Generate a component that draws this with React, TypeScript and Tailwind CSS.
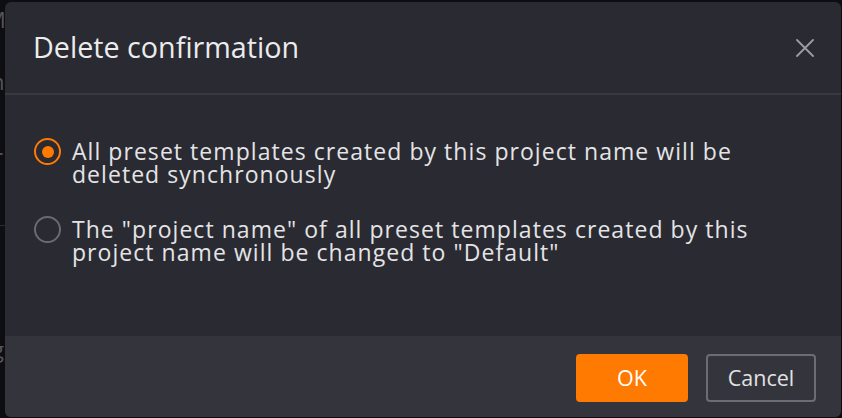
import React from "react";

function Radio({ checked }: { checked: boolean }) {
  return checked ? (
    <div className="w-[27px] h-[27px] rounded-full border-2 border-[#ff7a00] flex items-center justify-center shrink-0">
      <div className="w-[12px] h-[12px] rounded-full bg-[#ff7a00]" />
    </div>
  ) : (
    <div className="w-[27px] h-[27px] rounded-full border-2 border-[#6a6a70] shrink-0" />
  );
}

export default function App() {
  const font = { fontFamily: '"Open Sans", "Noto Sans", sans-serif' };
  return (
    <div className="relative w-[842px] h-[418px] bg-[#0d0d12] overflow-hidden" style={font}>
      {/* backdrop hints (page behind the dialog) */}
      <div className="absolute left-0 top-0 w-[5px] h-full overflow-hidden text-[#55555b] text-[22px] leading-none">
        <span className="absolute left-[-14px] top-[8px]">M</span>
        <span className="absolute left-[-9px] top-[70px]">n</span>
        <span className="absolute left-[-6px] top-[145px]">r</span>
        <div className="absolute top-[225px] left-0 w-[5px] h-[1px] bg-[#2a2a30]" />
        <span className="absolute left-[-8px] top-[338px]">g</span>
      </div>
      {/* dialog */}
      <div className="absolute left-[5px] top-[2px] w-[836px] h-[415px] rounded-[6px] bg-[#2a2a32] flex flex-col overflow-hidden">
        <div className="h-[93px] shrink-0 border-b-2 border-[#38383f] flex items-center justify-between pl-[28px] pr-[27px]">
          <span className="text-[28.7px] text-[#ececec] leading-none pb-[1px]">Delete confirmation</span>
          <svg width="18" height="18" viewBox="0 0 18 18" className="mt-[1px]">
            <path d="M1 1L17 17M17 1L1 17" stroke="#9c9ca2" strokeWidth="1.8" strokeLinecap="round" />
          </svg>
        </div>
        <div className="flex-1 flex flex-col gap-[32px] pl-[29px] pt-[45px]">
          <div className="flex items-start gap-[11px]">
            <div className="mt-[-2px]">
              <Radio checked />
            </div>
            <p className="text-[23px] leading-[23px] tracking-[1.05px] text-[#e4e4e6]">
              All preset templates created by this project name will be
              <br />
              deleted synchronously
            </p>
          </div>
          <div className="flex items-start gap-[11px]">
            <div className="mt-[-2px]">
              <Radio checked={false} />
            </div>
            <p className="text-[23px] leading-[23px] tracking-[1.05px] text-[#e4e4e6]">
              The "project name" of all preset templates created by this
              <br />
              project name will be changed to "Default"
            </p>
          </div>
        </div>
        <div className="h-[81px] shrink-0 bg-[#34343d] flex items-start justify-end gap-[18px] pt-[18px] pr-[25px]">
          <button className="w-[112px] h-[48px] rounded-[4px] bg-[#ff7a00] text-white text-[21.5px]">OK</button>
          <button className="w-[110px] h-[48px] rounded-[4px] border-2 border-[#6c6c72] text-[#e2e2e4] text-[21.5px]">Cancel</button>
        </div>
      </div>
    </div>
  );
}
